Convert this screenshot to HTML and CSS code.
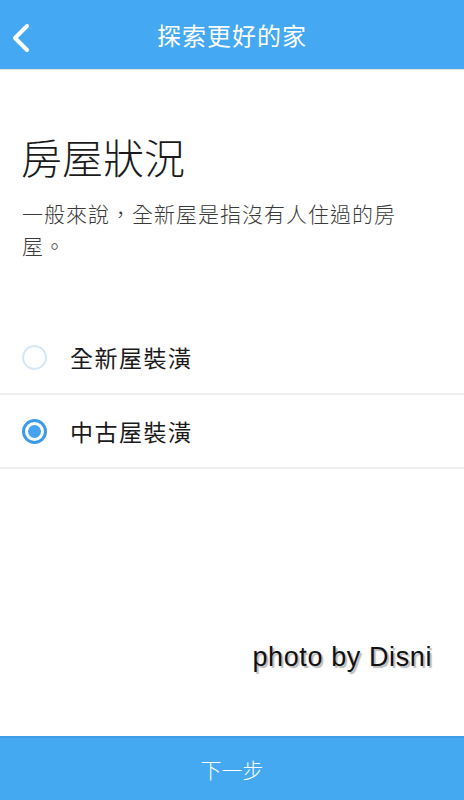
FILE: index.html
```html
<!DOCTYPE html>
<html lang="zh-Hant">
<head>
    <meta charset="UTF-8">
    <meta name="viewport" content="width=device-width, initial-scale=1.0">
    <title>探索更好的家</title>
    <link rel="stylesheet" href="styles.css">
</head>
<body>
    <header class="topbar">
        <a class="back" href="#">
            <svg width="22" height="32" viewBox="0 0 22 32">
                <path d="M17 4 L5 16 L17 28" fill="none" stroke="#fff" stroke-width="4" stroke-linecap="round" stroke-linejoin="round"/>
            </svg>
        </a>
        <h1 class="title">探索更好的家</h1>
    </header>
    <main class="content">
        <h2 class="heading">房屋狀況</h2>
        <p class="desc">一般來說，全新屋是指沒有人住過的房屋。</p>
        <ul class="options">
            <li class="option">
                <span class="radio"></span>
                <span class="label">全新屋裝潢</span>
            </li>
            <li class="option">
                <span class="radio checked"></span>
                <span class="label">中古屋裝潢</span>
            </li>
        </ul>
        <div class="credit">photo by Disni</div>
    </main>
    <footer class="nextbar">下一步</footer>
</body>
</html>
```
FILE: styles.css
```css
body {
    margin: 0;
    width: 464px;
    height: 800px;
    display: flex;
    flex-direction: column;
    font-family: "Noto Sans CJK TC", "Noto Sans", sans-serif;
    background-color: #fff;
    color: #222;
}
.topbar {
    height: 69px;
    background-color: #45a8f2;
    border-bottom: 1px solid #e3e3e3;
    display: flex;
    align-items: center;
    justify-content: center;
    position: relative;
}
.back {
    position: absolute;
    left: 10px;
    top: 22px;
    display: block;
}
.title {
    margin: 0;
    font-size: 24px;
    font-weight: normal;
    color: #fff;
    letter-spacing: 1px;
}
.content {
    flex: 1;
    display: flex;
    flex-direction: column;
}
.heading {
    margin: 56px 0 0 21px;
    font-size: 41px;
    font-weight: 300;
    line-height: 60px;
    color: #1a1a1a;
}
.desc {
    margin: 11px 0 0 22px;
    width: 390px;
    font-size: 21px;
    line-height: 32px;
    color: #3a3a3a;
    letter-spacing: 1px;
    font-weight: 300;
}
.options {
    list-style: none;
    margin: 60px 0 0;
    padding: 0;
}
.option {
    height: 72px;
    display: flex;
    align-items: center;
    border-bottom: 2px solid #eeeeee;
}
.radio {
    width: 21px;
    height: 21px;
    margin-left: 22px;
    margin-right: 23px;
    border: 2px solid #d5e8f9;
    border-radius: 50%;
    box-sizing: content-box;
    position: relative;
}
.radio.checked {
    border: 3px solid #3b9be8;
    width: 19px;
    height: 19px;
}
.radio.checked::after {
    content: "";
    position: absolute;
    left: 3px;
    top: 3px;
    width: 13px;
    height: 13px;
    border-radius: 50%;
    background-color: #45a3ef;
}
.label {
    font-size: 23px;
    color: #1a1a1a;
    letter-spacing: 1.5px;
}
.credit {
    margin: auto 32px 63px auto;
    font-family: "Liberation Sans", Arial, sans-serif;
    font-size: 27px;
    letter-spacing: 0.6px;
    color: #111;
    text-shadow: 2px 2px 1px #bbb;
}
.nextbar {
    height: 64px;
    background-color: #45a9f2;
    border-top: 2px solid #3d9ee6;
    box-sizing: border-box;
    display: flex;
    align-items: center;
    justify-content: center;
    color: #fff;
    font-size: 21px;
    font-weight: 300;
}
```
